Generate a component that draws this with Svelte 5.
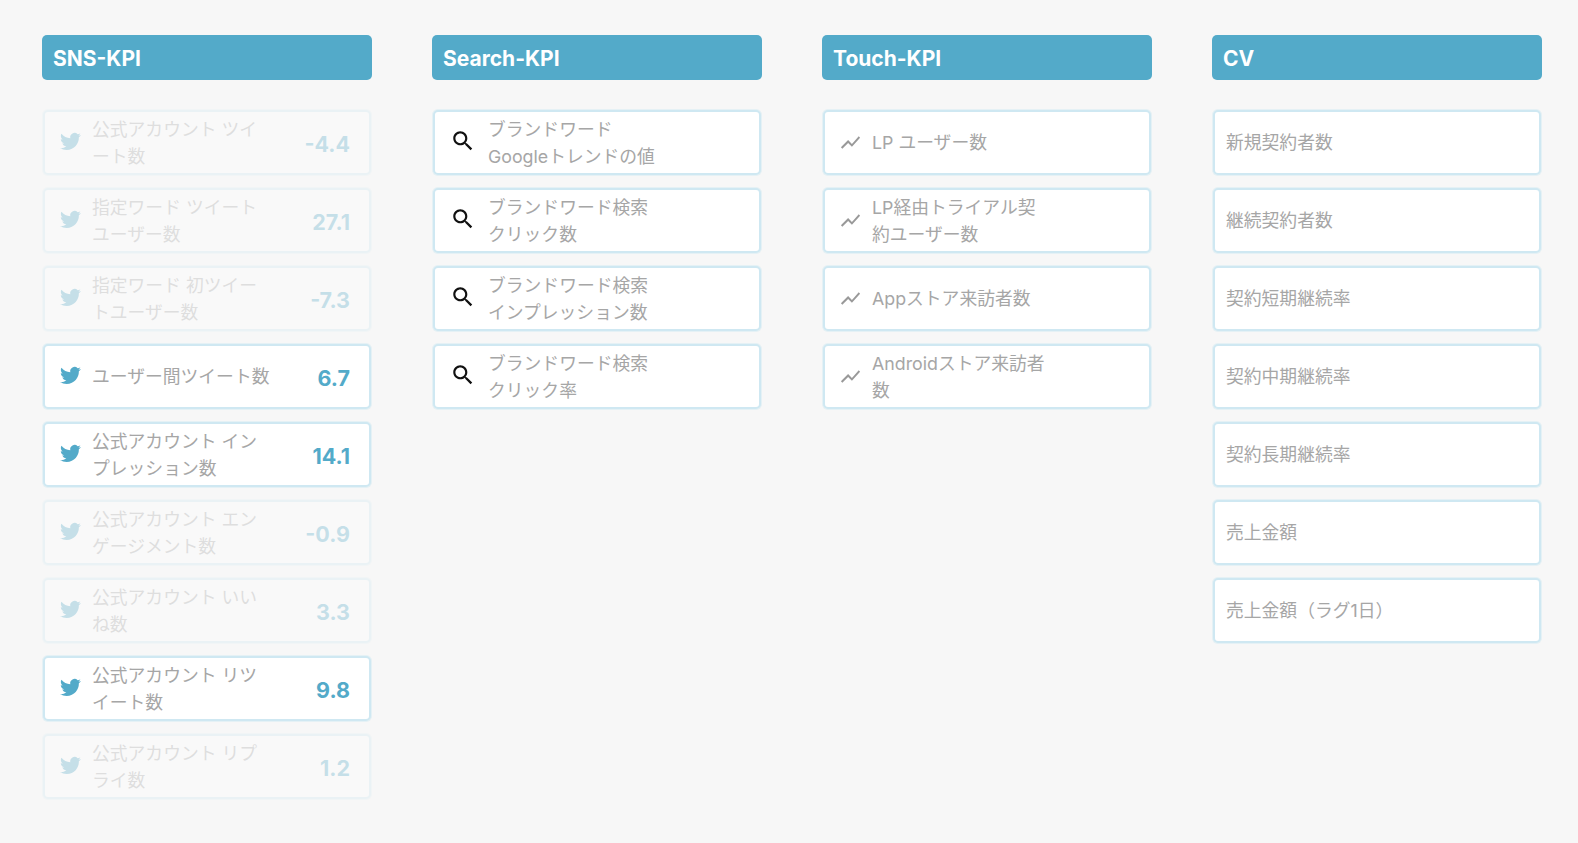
<script>
  const sns = [
    { lines: ['公式アカウント ツイ', 'ート数'], value: '-4.4', dim: true },
    { lines: ['指定ワード ツイート', 'ユーザー数'], value: '27.1', dim: true },
    { lines: ['指定ワード 初ツイー', 'トユーザー数'], value: '-7.3', dim: true },
    { lines: ['ユーザー間ツイート数'], value: '6.7' },
    { lines: ['公式アカウント イン', 'プレッション数'], value: '14.1' },
    { lines: ['公式アカウント エン', 'ゲージメント数'], value: '-0.9', dim: true },
    { lines: ['公式アカウント いい', 'ね数'], value: '3.3', dim: true },
    { lines: ['公式アカウント リツ', 'イート数'], value: '9.8' },
    { lines: ['公式アカウント リプ', 'ライ数'], value: '1.2', dim: true }
  ];
  const search = [
    ['ブランドワード', 'Googleトレンドの値'],
    ['ブランドワード検索', 'クリック数'],
    ['ブランドワード検索', 'インプレッション数'],
    ['ブランドワード検索', 'クリック率']
  ].map((lines) => ({ lines }));
  const touch = [
    ['LP ユーザー数'],
    ['LP経由トライアル契', '約ユーザー数'],
    ['Appストア来訪者数'],
    ['Androidストア来訪者', '数']
  ].map((lines) => ({ lines }));
  const cv = ['新規契約者数', '継続契約者数', '契約短期継続率', '契約中期継続率', '契約長期継続率', '売上金額', '売上金額（ラグ1日）'].map((t) => ({ lines: [t] }));

  const columns = [
    { title: 'SNS-KPI', kind: 'bird', items: sns },
    { title: 'Search-KPI', kind: 'search', items: search },
    { title: 'Touch-KPI', kind: 'chart', items: touch },
    { title: 'CV', kind: 'none', items: cv }
  ];
</script>

<main class="board">
  {#each columns as col}
    <section class="column">
      <h2 class="head"><span>{col.title}</span></h2>
      <ul class="list">
        {#each col.items as item}
          <li class="card {col.kind}" class:dim={item.dim}>
            {#if col.kind === 'bird'}
              <svg class="icon" viewBox="0 0 24 24" aria-hidden="true"><path d="M23.953 4.57a10 10 0 01-2.825.775 4.958 4.958 0 002.163-2.723c-.951.555-2.005.959-3.127 1.184a4.92 4.92 0 00-8.384 4.482C7.69 8.095 4.067 6.13 1.64 3.162a4.822 4.822 0 00-.666 2.475c0 1.71.87 3.213 2.188 4.096a4.904 4.904 0 01-2.228-.616v.06a4.923 4.923 0 003.946 4.827 4.996 4.996 0 01-2.212.085 4.936 4.936 0 004.604 3.417 9.867 9.867 0 01-6.102 2.105c-.39 0-.779-.023-1.17-.067a13.995 13.995 0 007.557 2.209c9.053 0 13.998-7.496 13.998-13.985 0-.21 0-.42-.015-.63A9.935 9.935 0 0024 4.59z"/></svg>
            {:else if col.kind === 'search'}
              <svg class="icon" viewBox="0 0 24 24" aria-hidden="true"><path d="M15.5 14h-.79l-.28-.27C15.41 12.59 16 11.11 16 9.5 16 5.91 13.09 3 9.5 3S3 5.91 3 9.5 5.91 16 9.5 16c1.61 0 3.09-.59 4.23-1.57l.27.28v.79l5 4.99L20.49 19l-4.99-5zm-6 0C7.01 14 5 11.99 5 9.5S7.01 5 9.5 5 14 7.01 14 9.5 11.99 14 9.5 14z"/></svg>
            {:else if col.kind === 'chart'}
              <svg class="icon" viewBox="0 0 24 24" aria-hidden="true"><path d="M3.5 18.49l6-6.01 4 4L22 6.92l-1.41-1.41-7.09 7.97-4-4L2 16.99z"/></svg>
            {/if}
            <p class="label">
              {#each item.lines as line}<span>{line}</span>{/each}
            </p>
            {#if item.value}<strong class="value">{item.value}</strong>{/if}
          </li>
        {/each}
      </ul>
    </section>
  {/each}
</main>

<style>
  :global(body) {
    margin: 0;
    background: #f7f7f7;
  }
  .board {
    display: grid;
    grid-template-columns: repeat(4, 330px);
    column-gap: 60px;
    padding: 35px 0 0 42px;
    font-family: Inter, "Noto Sans CJK JP", sans-serif;
    height: 808px;
    box-sizing: border-box;
    overflow: hidden;
  }
  .head {
    margin: 0 0 30px;
    height: 45px;
    padding: 0 11px;
    box-sizing: border-box;
    display: flex;
    align-items: center;
    background: #53aac9;
    border-radius: 5px;
    color: #fff;
    font-size: 21px;
    font-weight: 700;
  }
  .head span {
    padding-top: 2px;
  }
  .list {
    list-style: none;
    margin: 0 1px;
    padding: 0;
    display: flex;
    flex-direction: column;
    gap: 13px;
  }
  .card {
    height: 65px;
    box-sizing: border-box;
    display: flex;
    align-items: center;
    padding: 0 19px 0 15px;
    background: #fff;
    border: 2px solid #cfe8f2;
    border-radius: 5px;
    box-shadow: 0 0 0 1px rgba(207, 232, 242, 0.45);
  }
  .card.dim {
    opacity: 0.3;
  }
  .icon {
    flex: none;
    display: block;
  }
  .bird .icon {
    width: 21px;
    height: 21px;
    fill: #53aac9;
    margin: -2px 11px 0 0;
  }
  .search .icon {
    width: 26px;
    height: 26px;
    fill: #111;
    margin: -4px 12px 0 0;
  }
  .chart .icon {
    width: 23px;
    height: 23px;
    fill: #999;
    margin: 0 10px 0 -1px;
  }
  .none {
    padding-left: 11px;
  }
  .label {
    margin: 0;
    flex: 1;
    min-width: 0;
    color: #a6a6a6;
    font-size: 17.8px;
    line-height: 27px;
  }
  .label span {
    display: block;
    white-space: nowrap;
  }
  .value {
    color: #53aac9;
    font-size: 21.5px;
    font-weight: 700;
    padding-top: 2px;
  }
</style>
